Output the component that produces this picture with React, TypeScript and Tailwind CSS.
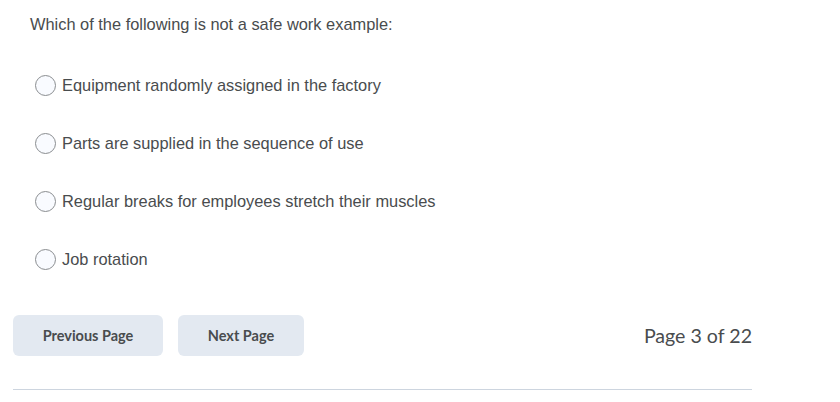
import React from "react";

const options = [
  "Equipment randomly assigned in the factory",
  "Parts are supplied in the sequence of use",
  "Regular breaks for employees stretch their muscles",
  "Job rotation",
];

export default function App() {
  return (
    <div className="w-[840px] h-[402px] bg-white overflow-hidden relative">
      <div className="pl-[30px] pt-[15px] text-[16.4px] leading-[18px] text-[#494c4e] [font-family:'Liberation_Sans',Arial,sans-serif]">
        Which of the following is not a safe work example:
      </div>
      <div className="flex flex-col pt-[23px] pl-[35px]">
        {options.map((o) => (
          <div key={o} className="flex items-center h-[58px]">
            <span className="w-[21px] h-[21px] rounded-full border border-[#8a8d90] bg-[#f9fbff] shrink-0" />
            <span className="ml-[6px] text-[16.4px] leading-[18px] text-[#494c4e] [font-family:'Liberation_Sans',Arial,sans-serif]">
              {o}
            </span>
          </div>
        ))}
      </div>
      <div className="flex items-center pl-[13px] pt-[27px] w-[752px] [font-family:Lato,sans-serif]">
        <button className="w-[150px] h-[41px] rounded-[6px] bg-[#e3e9f1] text-[14.5px] font-bold text-[#494c4e]">
          Previous Page
        </button>
        <button className="ml-[15px] w-[126px] h-[41px] rounded-[6px] bg-[#e3e9f1] text-[14.5px] font-bold text-[#494c4e]">
          Next Page
        </button>
        <div className="ml-auto text-[19.6px] text-[#494c4e]">Page 3 of 22</div>
      </div>
      <div className="ml-[13px] mt-[33px] w-[739px] h-px bg-[#cdd5df]" />
    </div>
  );
}
